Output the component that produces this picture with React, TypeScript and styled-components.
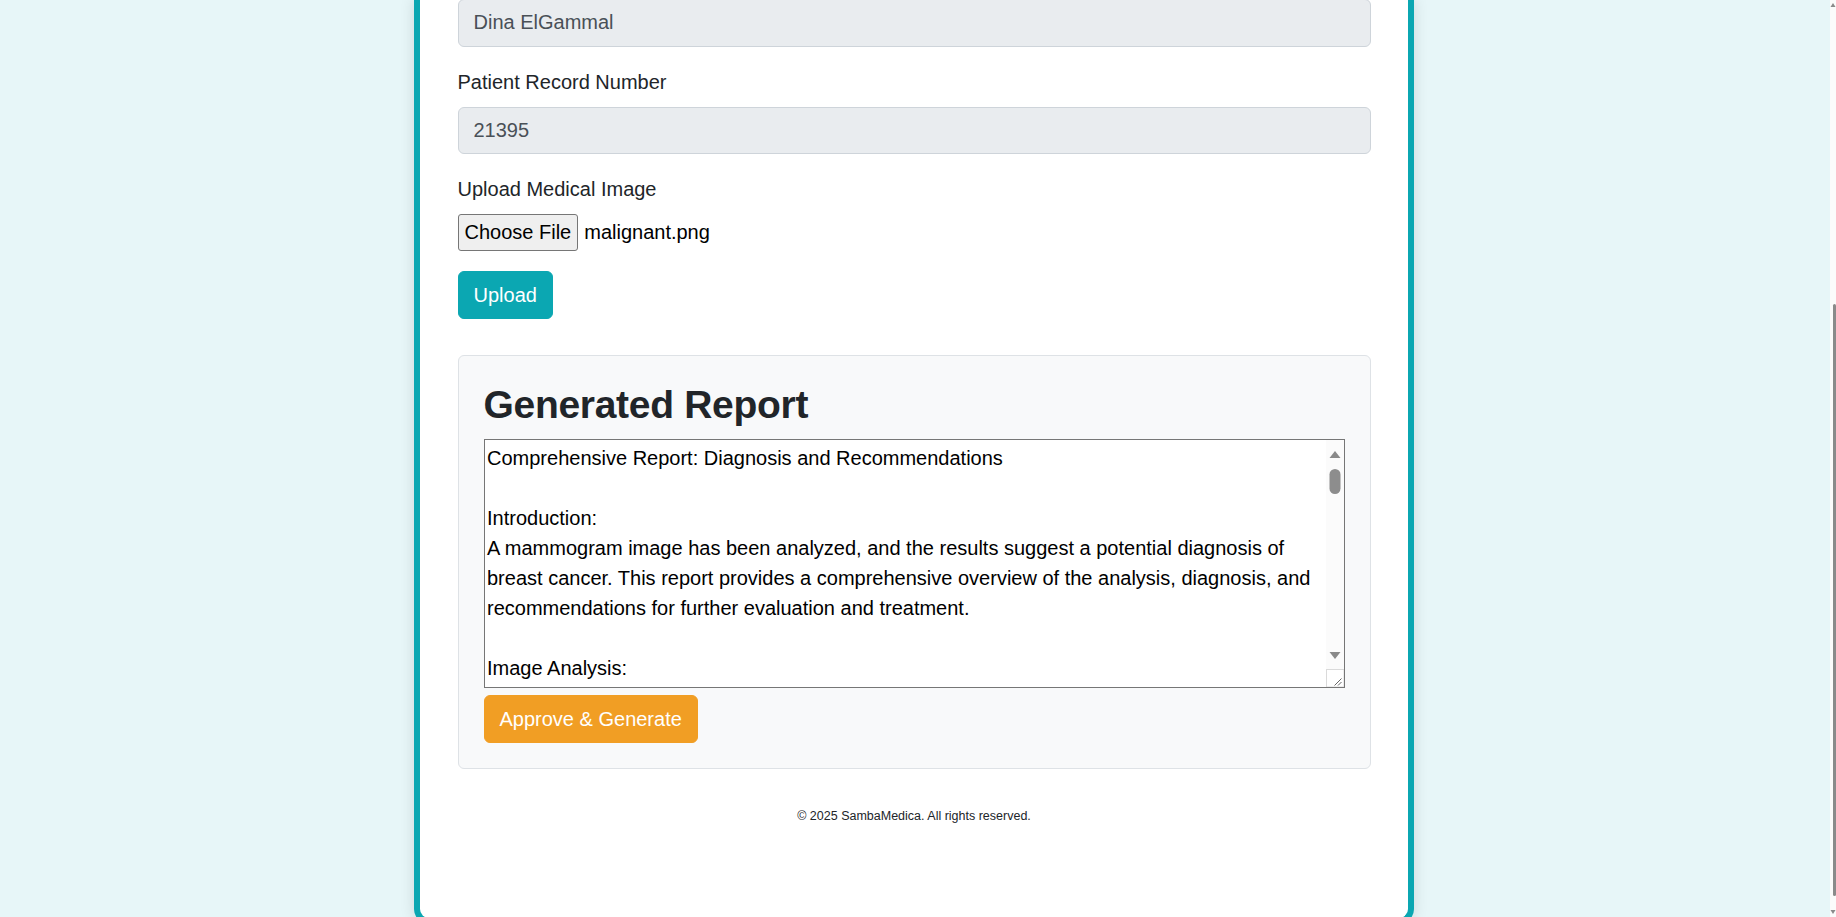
import React from "react";
import styled, { createGlobalStyle } from "styled-components";

const FONT = `"Liberation Sans", Arial, sans-serif`;
const TEAL = "#0ba7b2";
const ORANGE = "#f19e24";

const GlobalStyle = createGlobalStyle`
  html, body {
    margin: 0;
    padding: 0;
    height: 100%;
    overflow: hidden;
    background: #e7f6f8;
  }
  body {
    font-family: ${FONT};
    color: #212529;
  }
  *, *::before, *::after { box-sizing: border-box; }
`;

const Page = styled.div`
  display: flex;
  justify-content: center;
  align-items: flex-start;
  height: 100vh;
  padding-right: 8px;
`;

const Card = styled.main`
  width: 1000px;
  margin-top: -1px;
  background: #ffffff;
  border: 6px solid ${TEAL};
  border-top: none;
  border-radius: 0 0 15px 15px;
  box-shadow: 0 0 15px rgba(0, 0, 0, 0.12);
  padding: 0 37.5px 92px;
  display: flex;
  flex-direction: column;
  align-items: stretch;
`;

const Field = styled.div`
  display: flex;
  flex-direction: column;
  margin-bottom: 20px;
`;

const Label = styled.label`
  font-size: 20px;
  line-height: 30px;
  margin-bottom: 10px;
  color: #212529;
`;

const TextInput = styled.input`
  display: block;
  width: 100%;
  height: 47.5px;
  padding: 7.5px 15px;
  font-family: ${FONT};
  font-size: 20px;
  line-height: 30px;
  color: #495057;
  background: #e9ecef;
  border: 1px solid #ced4da;
  border-radius: 6px;
  outline: none;
`;

const FileRow = styled.div`
  display: flex;
  align-items: center;
  gap: 6px;
  height: 37px;
`;

const FileButton = styled.button`
  height: 37px;
  padding: 0 6px;
  font-family: ${FONT};
  font-size: 20px;
  color: #000;
  background: #efefef;
  border: 1px solid #767676;
  border-radius: 3px;
`;

const FileName = styled.span`
  font-size: 20px;
  color: #000;
`;

const ActionButton = styled.button<{ $tone: "teal" | "orange" }>`
  align-self: flex-start;
  height: 47.5px;
  padding: 0 15px;
  font-family: ${FONT};
  font-size: 20px;
  line-height: 30px;
  color: #fff;
  background: ${(p) => (p.$tone === "teal" ? TEAL : ORANGE)};
  border: 1px solid ${(p) => (p.$tone === "teal" ? TEAL : ORANGE)};
  border-radius: 6px;
`;

const ReportBox = styled.section`
  margin-top: 36.5px;
  padding: 25px;
  background: #f8f9fa;
  border: 1px solid #dee2e6;
  border-radius: 6px;
  display: flex;
  flex-direction: column;
  align-items: stretch;
`;

const ReportTitle = styled.h2`
  margin: 0 0 10px;
  font-size: 39px;
  line-height: 48px;
  font-weight: 700;
  letter-spacing: -0.3px;
  color: #212529;
`;

const TextFrame = styled.div`
  position: relative;
  margin-bottom: 7px;
`;

const ReportText = styled.textarea`
  display: block;
  width: 100%;
  height: 249px;
  margin: 0;
  padding: 2.5px 20.5px 2.5px 2.5px;
  font-family: ${FONT};
  font-size: 20px;
  line-height: 30px;
  color: #000;
  background: #fff;
  border: 1px solid #767676;
  border-radius: 0;
  outline: none;
  resize: none;
  overflow: hidden;
`;

const TextScrollbar = styled.svg`
  position: absolute;
  top: 1px;
  right: 1px;
  width: 18px;
  height: 247px;
  pointer-events: none;
`;

const Footer = styled.footer`
  margin-top: 38.5px;
  text-align: center;
  font-size: 12.5px;
  line-height: 18.75px;
  color: #212529;
`;

const ScrollRail = styled.svg`
  position: fixed;
  top: 0;
  right: 0;
  width: 6px;
  height: 100vh;
`;

const REPORT = `Comprehensive Report: Diagnosis and Recommendations

Introduction:
A mammogram image has been analyzed, and the results suggest a potential diagnosis of breast cancer. This report provides a comprehensive overview of the analysis, diagnosis, and recommendations for further evaluation and treatment.

Image Analysis:
The mammogram image was processed using a deep learning classification model trained on annotated breast imaging data. The model identified a region of interest with features commonly associated with malignancy, including an irregular shape, spiculated margins and increased density relative to the surrounding tissue.

Diagnosis:
Based on the image analysis, the predicted classification is malignant. The confidence of the model supports a high suspicion of breast cancer; however, this finding must be confirmed by a qualified radiologist and by histopathological examination.

Recommendations:
1. Diagnostic mammography with additional views of the affected area.
2. Targeted breast ultrasound to further characterize the lesion.
3. Breast MRI, if clinically indicated, to assess the extent of disease.
4. Image-guided core needle biopsy for histopathological confirmation.
5. Referral to a multidisciplinary breast care team for treatment planning.

Follow-up:
The patient should be informed of the findings and scheduled for the recommended examinations as soon as possible. Results of the biopsy should be reviewed together with the imaging findings to determine staging and the most appropriate course of treatment.

Conclusion:
The analysis of the mammogram image indicates a potential malignancy. Prompt further evaluation is recommended to confirm the diagnosis and to initiate timely treatment.

Disclaimer:
This report was generated with the assistance of an automated system and is intended to support, not replace, the clinical judgement of qualified healthcare professionals.`;

export default function App() {
  return (
    <>
      <GlobalStyle />
      <Page>
        <Card>
          <Field>
            <TextInput readOnly value="Dina ElGammal" />
          </Field>
          <Field>
            <Label htmlFor="record">Patient Record Number</Label>
            <TextInput id="record" readOnly value="21395" />
          </Field>
          <Field>
            <Label>Upload Medical Image</Label>
            <FileRow>
              <FileButton type="button">Choose File</FileButton>
              <FileName>malignant.png</FileName>
            </FileRow>
          </Field>
          <ActionButton type="button" $tone="teal">
            Upload
          </ActionButton>
          <ReportBox>
            <ReportTitle>Generated Report</ReportTitle>
            <TextFrame>
              <ReportText readOnly value={REPORT} />
              <TextScrollbar viewBox="0 0 18 247">
                <rect x="0" y="0" width="18" height="229" fill="#fbfbfb" />
                <polygon points="9,11 14.5,18 3.5,18" fill="#8a8a8a" />
                <rect x="3.5" y="29" width="11" height="25" rx="5.5" fill="#8d8d8d" />
                <polygon points="3.5,212 14.5,212 9,219" fill="#8a8a8a" />
                <rect
                  x="0.5"
                  y="229.5"
                  width="17.5"
                  height="17.5"
                  fill="#ffffff"
                  stroke="#dadada"
                  strokeWidth="1"
                />
                <line x1="15.5" y1="238.5" x2="8.5" y2="245.5" stroke="#666" strokeWidth="1" />
                <line x1="15.5" y1="242" x2="12" y2="245.5" stroke="#666" strokeWidth="1" />
              </TextScrollbar>
            </TextFrame>
            <ActionButton type="button" $tone="orange">
              Approve &amp; Generate
            </ActionButton>
          </ReportBox>
          <Footer>© 2025 SambaMedica. All rights reserved.</Footer>
        </Card>
      </Page>
      <ScrollRail viewBox="0 0 6 917" preserveAspectRatio="none">
        <rect x="0" y="0" width="6" height="917" fill="#fbfbfb" />
        <polygon points="3,3 5.5,7 0.5,7" fill="#8a8a8a" />
        <rect x="3" y="304" width="3" height="592" rx="1.5" fill="#8a8a8a" />
        <polygon points="3,914 5.5,910 0.5,910" fill="#8a8a8a" />
      </ScrollRail>
    </>
  );
}
